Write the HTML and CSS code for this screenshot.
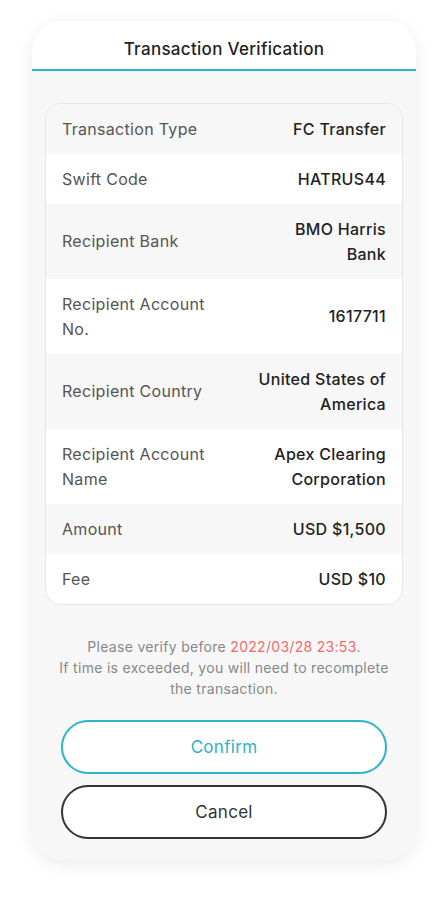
FILE: index.html
```html
<!DOCTYPE html>
<html lang="en">
<head>
    <meta charset="UTF-8">
    <meta name="viewport" content="width=device-width, initial-scale=1.0">
    <title>Transaction Verification</title>
    <link rel="stylesheet" href="styles.css">
</head>
<body>

    <div class="dialog">
        <div class="dialog-header">
            <h1>Transaction Verification</h1>
        </div>

        <div class="dialog-body">
            <div class="detail-list">
                <div class="detail-row">
                    <span class="label">Transaction Type</span>
                    <span class="value">FC Transfer</span>
                </div>
                <div class="detail-row">
                    <span class="label">Swift Code</span>
                    <span class="value">HATRUS44</span>
                </div>
                <div class="detail-row">
                    <span class="label">Recipient Bank</span>
                    <span class="value">BMO Harris<br>Bank</span>
                </div>
                <div class="detail-row">
                    <span class="label">Recipient Account<br>No.</span>
                    <span class="value">1617711</span>
                </div>
                <div class="detail-row">
                    <span class="label">Recipient Country</span>
                    <span class="value">United States of<br>America</span>
                </div>
                <div class="detail-row">
                    <span class="label">Recipient Account<br>Name</span>
                    <span class="value">Apex Clearing<br>Corporation</span>
                </div>
                <div class="detail-row">
                    <span class="label">Amount</span>
                    <span class="value">USD $1,500</span>
                </div>
                <div class="detail-row">
                    <span class="label">Fee</span>
                    <span class="value">USD $10</span>
                </div>
            </div>

            <p class="notice">
                Please verify before <span class="deadline">2022/03/28 23:53</span>.<br>
                If time is exceeded, you will need to recomplete<br>
                the transaction.
            </p>

            <div class="actions">
                <button class="btn btn-confirm">Confirm</button>
                <button class="btn btn-cancel">Cancel</button>
            </div>
        </div>
    </div>

</body>
</html>
```

FILE: styles.css
```css
body {
    margin: 0;
    padding: 21px 0 40px;
    background-color: #ffffff;
    font-family: "Inter", "Noto Sans", sans-serif;
    letter-spacing: 0.3px;
    color: #222;
}

/* Dialog card */
.dialog {
    width: 384px;
    margin: 0 auto;
    background-color: #f7f7f7;
    border-radius: 30px;
    overflow: hidden;
    box-shadow: 0 4px 18px rgba(0, 0, 0, 0.08);
}
.dialog-header {
    background-color: #fff;
    height: 48px;
    border-bottom: 2px solid #2bb5c5;
    display: flex;
    align-items: center;
    justify-content: center;
}
.dialog-header h1 {
    margin: 8px 0 0;
    font-size: 17px;
    font-weight: 500;
    color: #1f1f1f;
}

.dialog-body {
    padding: 32px 13px 21px;
}

/* Details table */
.detail-list {
    border: 1px solid #e6e6e6;
    border-radius: 16px;
    overflow: hidden;
    background-color: #fff;
}
.detail-row {
    display: flex;
    justify-content: space-between;
    align-items: center;
    padding: 12.5px 16px;
    font-size: 16px;
    line-height: 25px;
}
.detail-row:nth-child(odd) {
    background-color: #f7f7f7;
}
.label {
    color: #555;
}
.value {
    color: #222;
    font-weight: 500;
    text-align: right;
}

/* Notice */
.notice {
    margin: 31px 0 0;
    font-size: 14px;
    line-height: 21px;
    color: #888;
    text-align: center;
}
.deadline {
    color: #f06b6b;
}

/* Buttons */
.actions {
    display: flex;
    flex-direction: column;
    gap: 11px;
    padding: 0 16px;
    margin-top: 21px;
}
.btn {
    height: 54px;
    border-radius: 27px;
    background-color: #fff;
    font-family: inherit;
    font-size: 17px;
    letter-spacing: inherit;
    cursor: pointer;
}
.btn-confirm {
    border: 2px solid #2bb5c5;
    color: #2bb5c5;
}
.btn-cancel {
    border: 2px solid #333;
    color: #333;
}
```
